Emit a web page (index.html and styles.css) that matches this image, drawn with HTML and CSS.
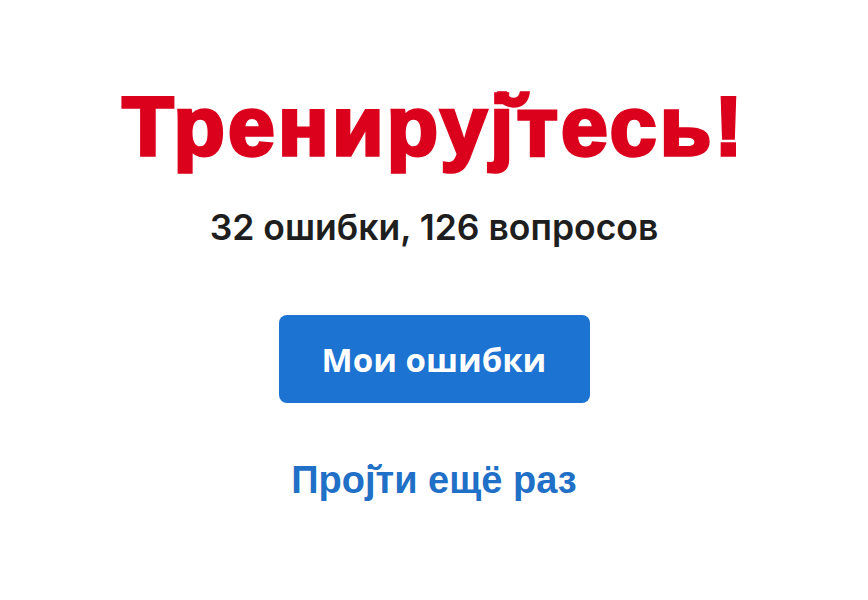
FILE: index.html
```html
<!DOCTYPE html>
<html lang="ru">
<head>
<meta charset="utf-8">
<link rel="stylesheet" href="styles.css">
</head>
<body>
<main class="result">
  <h1 class="title">Тренируј̆тесь!</h1>
  <p class="summary">32 ошибки, 126 вопросов</p>
  <button class="primary">Мои ошибки</button>
  <a class="again" href="#">Прој̆ти ещё раз</a>
</main>
</body>
</html>
```
FILE: styles.css
```css
html, body {
  margin: 0;
  padding: 0;
  background: #fff;
}
.result {
  width: 868px;
  height: 600px;
  display: flex;
  flex-direction: column;
  align-items: center;
  box-sizing: border-box;
  padding-top: 81px;
}
.title {
  margin: 0;
  font-family: "Liberation Sans", Arial, sans-serif;
  font-weight: 700;
  font-size: 84px;
  line-height: 90px;
  color: #db001c;
  -webkit-text-stroke: 3.5px #db001c;
  letter-spacing: 3.2px;
}
.summary {
  margin: 37px 0 0;
  font-family: Inter, "Noto Sans", sans-serif;
  font-weight: 600;
  font-size: 35.5px;
  line-height: 40px;
  color: #1e1e1e;
}
.primary {
  margin-top: 67px;
  width: 311px;
  height: 88px;
  border: 0;
  border-radius: 8px;
  background: #1c73d1;
  color: #fff;
  font-family: "Open Sans", sans-serif;
  font-weight: 700;
  font-size: 33px;
  padding: 0;
}
.again {
  margin-top: 55px;
  font-family: "Liberation Sans", Arial, sans-serif;
  font-weight: 700;
  font-size: 38px;
  line-height: 44px;
  color: #1f70c6;
  text-decoration: none;
}
```
